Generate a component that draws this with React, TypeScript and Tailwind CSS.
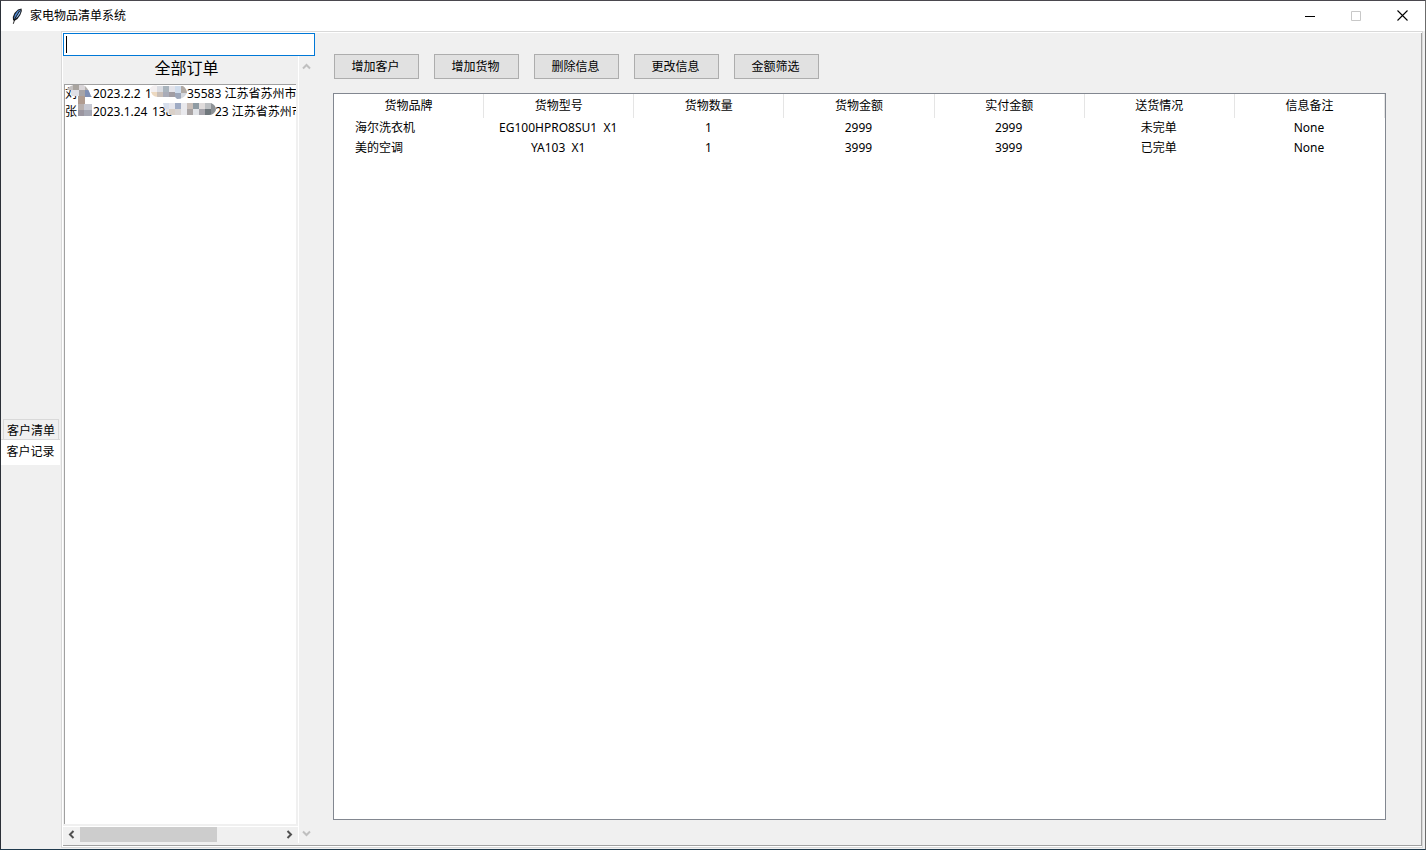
import { useState } from "react";

const font = "font-['Noto_Sans','Noto_Sans_CJK_SC',sans-serif]";

const tabs = ["客户清单", "客户记录"];

const actions = ["增加客户", "增加货物", "删除信息", "更改信息", "金额筛选"];

const columns = ["货物品牌", "货物型号", "货物数量", "货物金额", "实付金额", "送货情况", "信息备注"];

const goods = [
    ["海尔洗衣机", "EG100HPRO8SU1  X1", "1", "2999", "2999", "未完单", "None"],
    ["美的空调", "YA103  X1", "1", "3999", "3999", "已完单", "None"],
];

// x, y, width, height, colour of each block that hides a private detail
const blocks: [number, number, number, number, string][] = [
    [3, 0, 6, 6, "#c3c0c0"],
    [9, 0, 6, 6, "#a9a49f"],
    [15, 0, 6, 6, "#d9d5d8"],
    [21, 0, 6, 7, "#b5b1ae"],
    [7, 6, 8, 6, "#dfdfe6"],
    [15, 6, 6, 8, "#a8a4a6"],
    [21, 6, 7, 8, "#7f8fb4"],
    [14, 12, 7, 9, "#b09c90"],
    [13, 20, 7, 6, "#b8b0ae"],
    [13, 26, 7, 6, "#9b96a0"],
    [20, 20, 8, 6, "#c6c8d2"],
    [20, 26, 8, 6, "#a5a7b3"],
    [86, 0, 7, 8, "#f3eff0"],
    [86, 8, 7, 6, "#edd9c0"],
    [93, 2, 6, 6, "#dadce2"],
    [93, 8, 6, 6, "#c9bfb8"],
    [99, 2, 6, 6, "#a9b4bd"],
    [99, 8, 6, 6, "#a9acb8"],
    [105, 2, 6, 6, "#e4e4ea"],
    [105, 8, 6, 6, "#a19da3"],
    [111, 2, 6, 7, "#cfdcec"],
    [111, 9, 6, 6, "#9da7ba"],
    [117, 2, 6, 7, "#b1aaa5"],
    [117, 9, 6, 6, "#d5d8de"],
    [99, 19, 6, 6, "#d6deec"],
    [99, 25, 6, 6, "#e3e3e6"],
    [105, 19, 6, 6, "#e6e6ec"],
    [105, 25, 6, 6, "#d9d0c8"],
    [111, 19, 6, 6, "#9fabc4"],
    [111, 25, 6, 6, "#d9d5d4"],
    [117, 19, 6, 12, "#e9e9ed"],
    [123, 19, 6, 6, "#cabfb9"],
    [123, 25, 6, 6, "#a8a3a3"],
    [129, 19, 6, 6, "#8f9ba3"],
    [129, 25, 6, 6, "#e2e4e8"],
    [135, 19, 6, 6, "#e0dcdc"],
    [135, 25, 6, 6, "#a6a4ab"],
    [141, 19, 6, 6, "#bcbfc2"],
    [141, 25, 6, 6, "#6f777c"],
    [147, 19, 5, 12, "#8d9296"],
];

function Chevron({ d, color }: { d: string; color: string }) {
    return (
        <svg width="9" height="9" viewBox="0 0 9 9" fill="none" stroke={color} strokeWidth="2">
            <path d={d} />
        </svg>
    );
}

function TitleBar() {
    return (
        <header className="flex h-[30px] shrink-0 items-center bg-white pl-2">
            <svg width="16" height="16" viewBox="0 0 16 16">
                <path d="M12.5 0.5L9 1.5L5.5 5L3.8 9L4 12L5.2 13L8.5 11L11.3 7L12.8 3Z" fill="#16181d" />
                <path d="M11.5 1.5L8.5 3L6 6.5L5 10L5.3 11.5Z" fill="#4d86cf" />
                <path d="M11.8 2L8.5 6L6 11L9 8.5L11 5.5Z" fill="#8fb9ea" />
                <path d="M10.5 3L6 10.5L4.3 15.8" stroke="#111111" strokeWidth="0.9" fill="none" />
            </svg>
            <h1 className="ml-[5px] flex-1 text-xs">家电物品清单系统</h1>
            <button aria-label="最小化" className="flex h-full w-[46px] items-center justify-center pb-px">
                <svg width="10" height="10" viewBox="0 0 10 10">
                    <path d="M0 5.5H10" stroke="#000" />
                </svg>
            </button>
            <button aria-label="最大化" disabled className="flex h-full w-[46px] items-center justify-center pb-px">
                <svg width="10" height="10" viewBox="0 0 10 10">
                    <path d="M0.5 0.5H9.5V9.5H0.5Z" stroke="#c8c8c8" fill="none" />
                </svg>
            </button>
            <button aria-label="关闭" className="flex h-full w-[46px] items-center justify-center pb-px">
                <svg width="11" height="11" viewBox="0 0 11 11">
                    <path d="M0.5 0.5L10.5 10.5M10.5 0.5L0.5 10.5" stroke="#000" strokeWidth="1.1" />
                </svg>
            </button>
        </header>
    );
}

function OrderList() {
    const [query, setQuery] = useState("");

    return (
        <aside className="flex w-[252px] shrink-0 flex-col pb-[2px]">
            <div className="relative h-[23px] shrink-0">
                <input
                    aria-label="搜索订单"
                    value={query}
                    onChange={(e) => setQuery(e.target.value)}
                    className="block h-full w-full border border-[#0078d7] bg-white px-[3px] text-xs caret-transparent outline-none"
                />
                <span className="absolute left-[3px] top-[3px] h-[17px] w-px bg-black" />
            </div>

            <div className="flex min-h-0 flex-1">
                <div className="flex min-w-0 flex-1 flex-col">
                    <h2 className="h-7 shrink-0 pl-3 text-center text-base leading-6">全部订单</h2>

                    <div className="relative mr-[2px] ml-px min-h-0 flex-1 overflow-hidden border-t border-l border-[#a0a0a0] bg-white">
                        <ul className="text-xs leading-[18px] whitespace-nowrap">
                            <li className="flex">
                                <span className="w-7 shrink-0">刘</span>
                                <span className="w-[52px] shrink-0">2023.2.2</span>
                                <span className="w-[42px] shrink-0">1</span>
                                <span>35583 江苏省苏州市</span>
                            </li>
                            <li className="flex">
                                <span className="w-7 shrink-0">张</span>
                                <span className="w-[59px] shrink-0">2023.1.24</span>
                                <span className="w-[63px] shrink-0">138</span>
                                <span>23 江苏省苏州市</span>
                            </li>
                        </ul>
                        <svg className="absolute top-0 left-0" width="160" height="34" viewBox="1 1 160 34">
                            <clipPath id="smudge">
                                <path d="M3 5Q8 0 15 0Q23 0 27 12L28 13H21V19L28 19V32H14V14Q6 13 3 5Z" />
                                <path d="M86 4Q89 0 95 2H119Q123 5 123 9Q120 15 113 15L111 13H94Q87 13 86 4Z" />
                                <path d="M99 19H147Q152 21 152 26Q150 31 145 31H107Q100 28 99 19Z" />
                            </clipPath>
                            <g clipPath="url(#smudge)">
                                {blocks.map(([x, y, w, h, fill], i) => (
                                    <rect key={i} x={x} y={y} width={w} height={h} fill={fill} />
                                ))}
                            </g>
                        </svg>
                    </div>

                    <div className="mt-[2px] flex h-[17px] shrink-0 items-center border-t border-white">
                        <button aria-label="向左滚动" className="flex h-full w-[17px] items-center justify-center pb-[2px]">
                            <Chevron d="M6.5 1L3 4.5L6.5 8" color="#505050" />
                        </button>
                        <div className="h-full flex-1 pb-px">
                            <div className="h-full w-[68%] bg-[#cdcdcd]" />
                        </div>
                        <button aria-label="向右滚动" className="flex h-full w-[17px] items-center justify-center pb-[2px]">
                            <Chevron d="M2.5 1L6 4.5L2.5 8" color="#505050" />
                        </button>
                    </div>
                </div>

                <div className="flex w-[17px] flex-col justify-between border-l border-white">
                    <button aria-label="向上滚动" disabled className="flex h-5 items-center justify-center pr-[2px]">
                        <Chevron d="M1 6.5L4.5 3L8 6.5" color="#bfbfbf" />
                    </button>
                    <button aria-label="向下滚动" disabled className="flex h-5 items-center justify-center pr-[2px]">
                        <Chevron d="M1 2.5L4.5 6L8 2.5" color="#bfbfbf" />
                    </button>
                </div>
            </div>
        </aside>
    );
}

function GoodsTable() {
    return (
        <div className="min-h-0 flex-1 overflow-hidden border border-[#828790] bg-white">
            <table className="w-full table-fixed border-collapse text-xs">
                <thead>
                    <tr className="h-6">
                        {columns.map((name) => (
                            <th key={name} className="p-0 pr-px font-normal shadow-[inset_-1px_0_0_#e5e5e5]">
                                {name}
                            </th>
                        ))}
                    </tr>
                </thead>
                <tbody>
                    {goods.map((row) => (
                        <tr key={row[0]} className="h-5">
                            {row.map((cell, i) => (
                                <td
                                    key={i}
                                    className={`p-0 whitespace-pre ${i === 0 ? "pl-[21px] text-left" : "pr-[2px] text-center"}`}
                                >
                                    {cell}
                                </td>
                            ))}
                        </tr>
                    ))}
                </tbody>
            </table>
        </div>
    );
}

export default function App() {
    const [tab, setTab] = useState(1);

    return (
        <div className={`flex h-screen flex-col overflow-hidden border border-t-[#4a484e] border-r-[#6b6b6b] border-b-[#1f3a4d] border-l-[#2b3038] bg-[#f0f0f0] text-black ${font}`}>
            <TitleBar />

            <div className="flex min-h-0 flex-1 pr-[2px] pb-px">
                {/* side tabs */}
                <nav className="flex w-[60px] shrink-0 flex-col justify-center pt-1 pr-px text-xs">
                    {tabs.map((name, i) => (
                        <button
                            key={name}
                            onClick={() => setTab(i)}
                            className={
                                i === tab
                                    ? "z-10 -mt-1 h-[26px] border-t border-[#d9d9d9] bg-white"
                                    : "mr-px ml-[2px] h-6 border border-b-0 border-[#d9d9d9]"
                            }
                        >
                            {name}
                        </button>
                    ))}
                </nav>

                {/* notebook page */}
                <div className="flex min-w-0 flex-1 border border-[#d9d9d9]">
                    <div className="flex min-w-0 flex-1 border-t border-b border-l border-white">
                        <div className="flex min-w-0 flex-1 border-r border-b border-[#a0a0a0]">
                            <OrderList />

                            <main className="flex min-w-0 flex-1 flex-col pt-[21px] pr-[35px] pb-[25px] pl-[18px]">
                                <div className="mb-[14px] ml-px flex gap-[15px]">
                                    {actions.map((name) => (
                                        <button
                                            key={name}
                                            className="h-[25px] w-[85px] border border-[#adadad] bg-[#e1e1e1] pr-[2px] text-xs"
                                        >
                                            {name}
                                        </button>
                                    ))}
                                </div>
                                <GoodsTable />
                            </main>
                        </div>
                    </div>
                </div>
            </div>
        </div>
    );
}
